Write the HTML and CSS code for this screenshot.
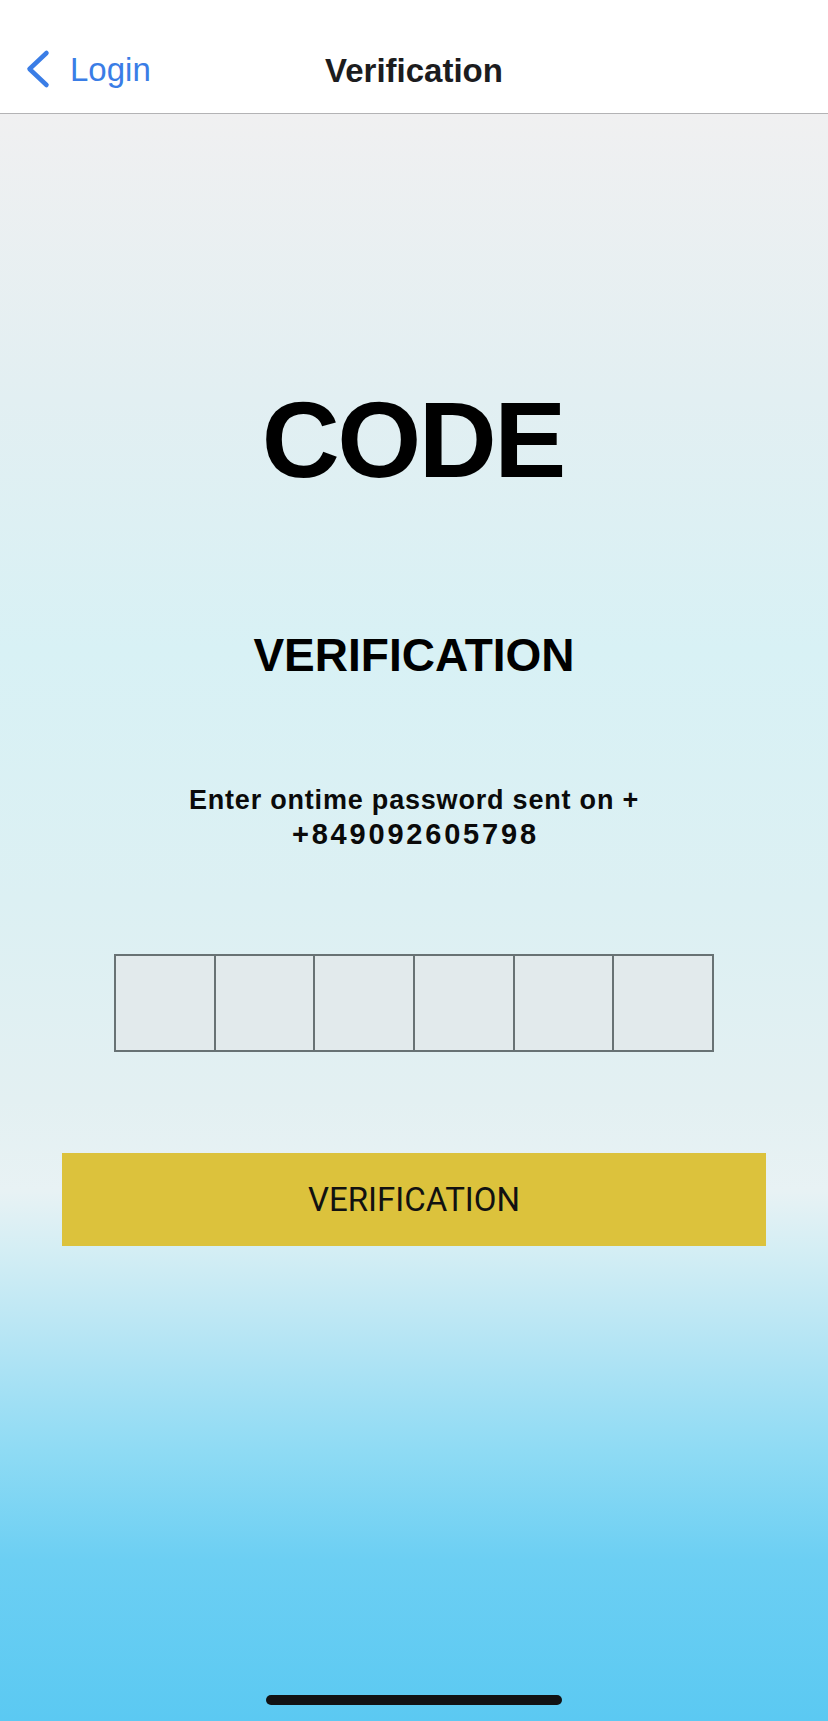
FILE: index.html
```html
<!DOCTYPE html>
<html lang="en">
<head>
<meta charset="utf-8">
<title>Verification</title>
<link rel="stylesheet" href="styles.css">
</head>
<body>
<div class="screen">
  <header class="navbar">
    <div class="nav-left">
      <svg class="chevron" width="26" height="40" viewBox="0 0 26 40" aria-hidden="true">
        <path d="M21.5 4 L4.5 20 L21.5 36" fill="none" stroke="#3a7de6" stroke-width="4.5" stroke-linecap="round" stroke-linejoin="round"/>
      </svg>
      <span class="back-label">Login</span>
    </div>
    <div class="nav-title">Verification</div>
    <div class="nav-right"></div>
  </header>
  <main class="content">
    <h1 class="code-title">CODE</h1>
    <h2 class="subtitle">VERIFICATION</h2>
    <p class="desc">Enter ontime password sent on +<br><span class="phone">+849092605798</span></p>
    <div class="otp">
      <div class="otp-cell"></div>
      <div class="otp-cell"></div>
      <div class="otp-cell"></div>
      <div class="otp-cell"></div>
      <div class="otp-cell"></div>
      <div class="otp-cell"></div>
    </div>
    <button class="verify-btn" type="button">VERIFICATION</button>
  </main>
  <div class="home-indicator"></div>
</div>
</body>
</html>
```
FILE: styles.css
```css
* { box-sizing: border-box; }
html, body { margin: 0; padding: 0; }
body {
  width: 828px;
  height: 1721px;
  overflow: hidden;
  font-family: "Liberation Sans", Arial, sans-serif;
}
.screen {
  position: relative;
  width: 828px;
  height: 1721px;
  display: flex;
  flex-direction: column;
}
.navbar {
  height: 114px;
  flex: 0 0 114px;
  background: #ffffff;
  border-bottom: 1px solid #b3b3b5;
  display: grid;
  grid-template-columns: 1fr auto 1fr;
  align-items: start;
  padding: 49px 0 0 25px;
}
.nav-left {
  display: flex;
  align-items: center;
  height: 40px;
}
.chevron { display: block; margin-right: 19px; }
.back-label {
  font-size: 33px;
  line-height: 40px;
  color: #3a7de6;
  padding-top: 2px;
}
.nav-title {
  font-size: 33px;
  font-weight: 700;
  line-height: 40px;
  color: #1c1c1e;
  padding-top: 2px;
  margin-left: -25px;
}
.content {
  flex: 1;
  display: flex;
  flex-direction: column;
  align-items: center;
  background: linear-gradient(to bottom,
    #f0f0f1 0px,
    #e2eff2 286px,
    #d8f1f5 536px,
    #dcf0f3 786px,
    #e3f0f2 986px,
    #e8f2f4 1076px,
    #d4eef4 1136px,
    #b2e4f4 1236px,
    #8fdbf4 1336px,
    #6ccff3 1446px,
    #5bc9f2 1607px);
}
.code-title {
  margin: 271px 0 0;
  font-size: 108px;
  line-height: 110px;
  font-weight: 700;
  letter-spacing: -2.5px;
  color: #000;
  text-indent: -2.5px;
}
.subtitle {
  margin: 138px 0 0;
  font-size: 46px;
  line-height: 44px;
  font-weight: 700;
  color: #000;
}
.desc {
  margin: 106px 0 0;
  font-size: 27px;
  line-height: 34px;
  font-weight: 700;
  letter-spacing: 0.8px;
  text-align: center;
  color: #0a0a0a;
}
.phone {
  font-size: 29px;
  letter-spacing: 2.8px;
  margin-left: 2.8px;
}
.otp {
  margin-top: 102px;
  width: 600px;
  height: 98px;
  display: grid;
  grid-template-columns: repeat(6, 1fr);
  gap: 2px;
  padding: 2px;
  background: #687274;
}
.otp-cell {
  background: #e2eaec;
}
.verify-btn {
  margin-top: 101px;
  width: 704px;
  height: 93px;
  border: 0;
  background: #dcc23c;
  font-family: Roboto, "Liberation Sans", sans-serif;
  font-size: 33px;
  color: #111;
  padding: 0;
}
.home-indicator {
  position: absolute;
  left: 266px;
  bottom: 16px;
  width: 296px;
  height: 10px;
  border-radius: 5px;
  background: #111214;
}
```
